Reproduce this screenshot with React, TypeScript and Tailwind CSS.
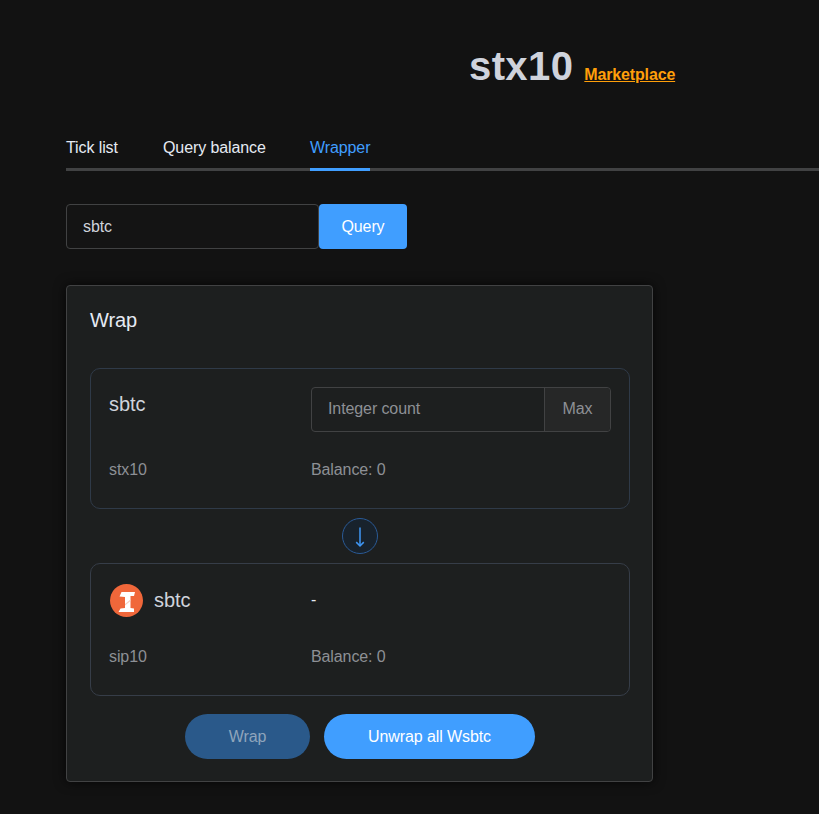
import React from 'react';

function SbtcLogo() {
  return (
    <svg viewBox="0 0 33 33" className="w-[33px] h-[33px] shrink-0">
      <circle cx="16.5" cy="16.5" r="16.5" fill="#f0673a" />
      <path d="M11.5 8 L25 8 L24 12 L20.5 12 L20.5 24 L24 24.5 L24 28 L8.5 28 L10.5 24.5 L15 24 L15 13 L9.5 12.5 Z" fill="#ffffff" />
      <path d="M15 20 L20.5 15.5 L20.5 17 L15 21.5 Z" fill="#f8cdbd" />
    </svg>
  );
}

function App() {
  return (
    <div className="min-h-[814px] bg-[#121212] overflow-hidden font-['Liberation_Sans',Arial,sans-serif] text-base tracking-[-0.1px]">
      <div className="pl-[66px] pt-[41px]">
        <div className="flex items-baseline pl-[403px] h-[50px]">
          <h1 className="text-[40px] leading-[50px] font-bold tracking-[0.4px] text-[#cfd3dc]">stx10</h1>
          <a className="ml-[11px] text-base font-bold tracking-[-0.15px] text-[#ff9f0a] underline">Marketplace</a>
        </div>

        <div className="mt-[31px] flex gap-[45px] h-[49px] border-b-[3px] border-[#414243] w-[760px]">
          <div className="w-[52px] h-[49px] leading-[52px] whitespace-nowrap text-[#e5eaf3]">Tick list</div>
          <div className="w-[102px] h-[49px] leading-[52px] whitespace-nowrap text-[#e5eaf3]">Query balance</div>
          <div className="w-[60px] h-[49px] leading-[52px] whitespace-nowrap text-[#409eff] border-b-[3px] border-[#409eff]">Wrapper</div>
        </div>

        <div className="mt-[33px] flex h-[45px]">
          <div className="w-[253px] flex items-center px-4 rounded border border-[#414243] bg-[#141414] text-[#cfd3dc]">sbtc</div>
          <button className="w-[88px] rounded bg-[#409eff] text-white">Query</button>
        </div>

        <div className="mt-9 w-[587px] h-[497px] rounded border border-[#414243] bg-[#1d1f1f] pl-[23px] pr-[22px] shadow-[0_0_12px_rgba(0,0,0,0.72)]">
          <div className="pt-5 text-xl leading-7 text-[#e5eaf3]">Wrap</div>

          <div className="mt-[34px] h-[141px] rounded-[10px] border border-[#2f3a48] px-[18px] pt-[18px]">
            <div className="flex h-[45px]">
              <div className="w-[202px] text-xl leading-[34px] text-[#cfd3dc]">sbtc</div>
              <div className="flex w-[300px] rounded border border-[#414243] text-[#8d9095]">
                <div className="flex-1 flex items-center px-4 pb-[2px]">Integer count</div>
                <div className="w-[66px] flex items-center justify-center pb-[2px] border-l border-[#414243] bg-[#262727] rounded-r">Max</div>
              </div>
            </div>
            <div className="flex mt-[26px] leading-6 text-[#8d9095]">
              <div className="w-[202px]">stx10</div>
              <div>Balance: 0</div>
            </div>
          </div>

          <div className="flex justify-center h-[54px] items-center">
            <div className="w-9 h-9 rounded-full border border-[#2a5a96] bg-[#18222c] flex items-center justify-center">
              <svg viewBox="0 0 36 36" className="w-9 h-9 text-[#3f97f5]" fill="none" stroke="currentColor" strokeWidth="1.6">
                <path d="M18 9 L18 28" />
                <path d="M14 24.5 L18 28.5 L22 24.5" />
              </svg>
            </div>
          </div>

          <div className="h-[133px] rounded-[10px] border border-[#363d48] px-[18px]">
            <div className="flex h-[72px] items-center">
              <div className="w-[201px] ml-[1px] flex items-center gap-[11px] text-xl text-[#cfd3dc]">
                <SbtcLogo />
                <span>sbtc</span>
              </div>
              <div className="text-[#e5eaf3]">-</div>
            </div>
            <div className="flex mt-[9px] leading-6 text-[#8d9095]">
              <div className="w-[202px]">sip10</div>
              <div>Balance: 0</div>
            </div>
          </div>

          <div className="mt-[18px] flex justify-center gap-[14px] h-[45px]">
            <button className="w-[125px] rounded-full bg-[#2a598a] text-[#8fa5bc]">Wrap</button>
            <button className="w-[211px] rounded-full bg-[#409eff] text-white">Unwrap all Wsbtc</button>
          </div>
        </div>
      </div>
    </div>
  );
}

export default App;
